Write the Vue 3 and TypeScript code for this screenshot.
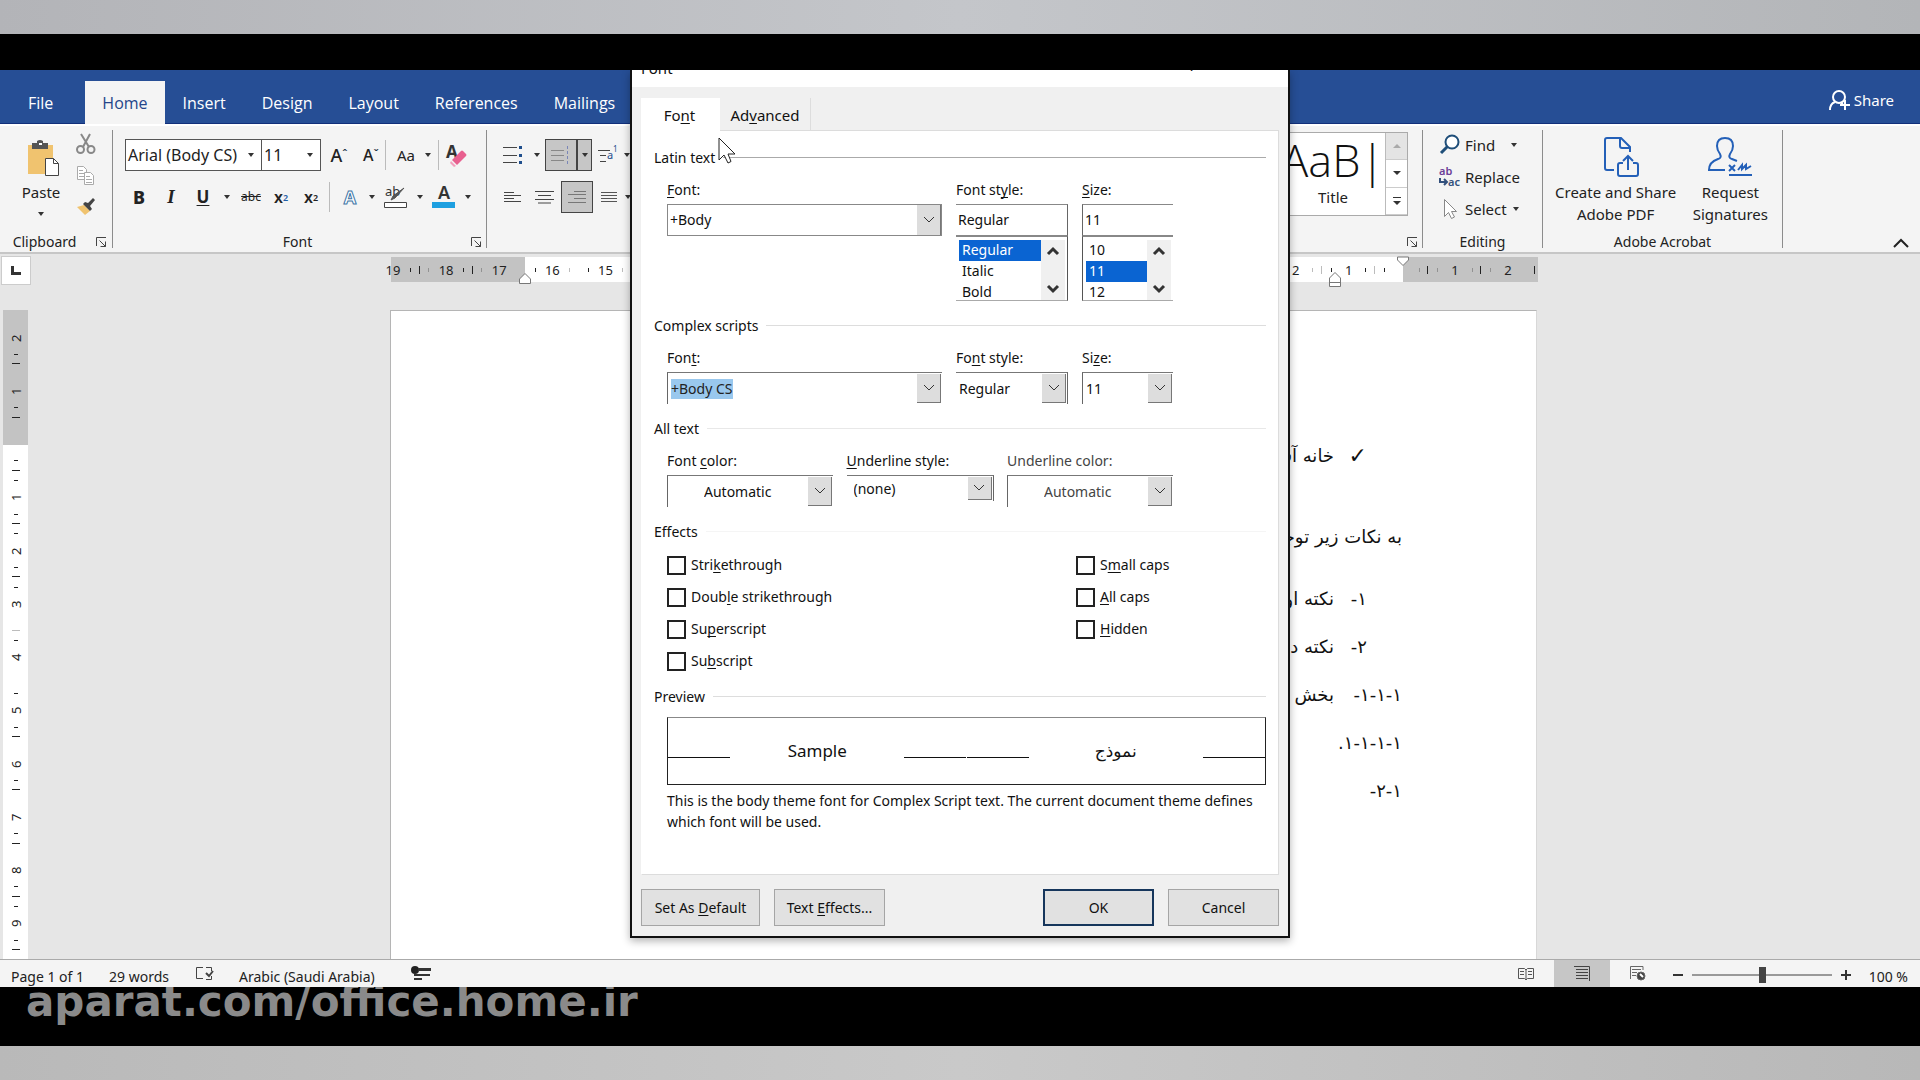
<script setup lang="ts">
import { h, onMounted, ref } from 'vue'

// Shared glyphs
const Caret = () =>
  h('svg', { class: 'caret', width: 6, height: 4, viewBox: '0 0 6 4' }, [h('path', { d: 'M0 0h6L3 4z', fill: '#333' })])
const Launcher = () =>
  h('svg', { width: 12, height: 12, viewBox: '0 0 12 12', fill: 'none', stroke: '#444' }, [
    h('path', { d: 'M1.5 10V1.5H11M4.5 4.5l6 6M10.5 5.5v5h-5' }),
  ])
const Chevron = () =>
  h('svg', { width: 12, height: 8, viewBox: '0 0 12 8', fill: 'none', stroke: '#333' }, [h('path', { d: 'M1 1l5 5 5-5' })])
const ScrollChevron = (props: { up?: boolean }) =>
  h('svg', { width: 12, height: 10, viewBox: '0 0 12 10', fill: 'none', stroke: '#333', 'stroke-width': 3 }, [
    h('path', { d: props.up ? 'M1 8l5-5 5 5' : 'M1 2l5 5 5-5' }),
  ])
ScrollChevron.props = { up: Boolean }

const tabs = ['File', 'Home', 'Insert', 'Design', 'Layout', 'References', 'Mailings']

// Ruler cell: label, tick before the label, tick after it, half-unit tick at the cell's end.
// Tones: 0 none, 1 faint, 2 dark
type Cell = [string, number, number, number]

const hCells: Cell[] = [
  ['19', 0, 2, 2], ['18', 1, 2, 2], ['17', 1, 0, 0], ['16', 2, 1, 0], ['15', 2, 1, 2],
  ...Array.from({ length: 12 }, (_, i): Cell => [String(14 - i), 1, 2, 2]),
  ['2', 1, 1, 1], ['1', 2, 2, 1], ['', 2, 1, 2], ['1', 1, 1, 2], ['2', 1, 0, 2],
]
const vCells: Cell[] = [
  ['2', 0, 2, 2], ['1', 0, 2, 2], ['', 0, 2, 2], ['1', 2, 2, 2], ['2', 2, 2, 2], ['3', 2, 0, 1],
  ['4', 2, 0, 0], ['5', 2, 2, 2], ['6', 0, 2, 2], ['7', 0, 2, 2], ['8', 0, 2, 2], ['9', 2, 2, 2],
]

interface DocLine { marker: string; text: string; kind: string }
const docLines: DocLine[] = [
  { marker: '✓', text: 'خانه آفیس', kind: 'bullet' },
  { marker: '', text: 'به نکات زیر توجه کنید', kind: 'plain' },
  { marker: '١-', text: 'نکته اول', kind: 'item' },
  { marker: '٢-', text: 'نکته دوم', kind: 'item' },
  { marker: '١-١-١-', text: 'بخش اول', kind: 'sub' },
  { marker: '١-١-١-١.', text: '', kind: 'sub' },
  { marker: '١-٢-', text: '', kind: 'sub' },
]

// [before, access key, after]
const effectsLeft = [
  ['Stri', 'k', 'ethrough'],
  ['Doub', 'l', 'e strikethrough'],
  ['Su', 'p', 'erscript'],
  ['Su', 'b', 'script'],
]
const effectsRight = [
  ['S', 'm', 'all caps'],
  ['', 'A', 'll caps'],
  ['', 'H', 'idden'],
]

const latinFont = ref('+Body')
const complexFont = ref('+Body CS')
const latinStyle = ref('Regular')
const latinSize = ref('11')
const zoomLevel = ref(50)
const complexInput = ref<HTMLInputElement | null>(null)

onMounted(() => {
  complexInput.value?.focus()
  complexInput.value?.select()
})
</script>

<template>
  <div class="screen">
    <div class="edge top"></div>
    <div class="band head"></div>

    <main class="word">
      <nav class="tabs">
        <a v-for="t in tabs" :key="t" href="#" class="tab" :class="{ active: t === 'Home' }">{{ t }}</a>
        <button class="share" type="button">
          <svg width="24" height="22" viewBox="0 0 24 22" fill="none" stroke="#fff" stroke-width="2">
            <circle cx="11" cy="8" r="6" /><path d="M2 21c0-4 2-7 5-8M13 14l2 1M17 11v10M12 16h10" />
          </svg>
          Share
        </button>
      </nav>

      <section class="ribbon">
        <div class="group clipboard">
          <div class="paste-row">
            <button class="paste" type="button">
              <svg width="34" height="38" viewBox="0 0 34 38">
                <path d="M1 5h25v29H1z" fill="#f0c36f" />
                <path d="M5 3h5V1q3-2 6 0v2h5v6H5z" fill="#555" /><path d="M12 3h3v2h-3z" fill="#fff" />
                <path d="M18.500 18.500h8l5 5v12h-13z" fill="#fff" stroke="#444" /><path d="M26.500 18.500v5h5" fill="none" stroke="#444" />
              </svg>
              <span>Paste</span>
              <Caret />
            </button>
            <div class="clip-tools">
              <button type="button" aria-label="Cut">
                <svg width="20" height="20" viewBox="0 0 20 20" fill="none" stroke="#888" stroke-width="2">
                  <path d="M5 0l8 13M14 0L7 13" /><circle cx="4.500" cy="15.500" r="3.500" /><circle cx="15" cy="15.500" r="3.500" />
                </svg>
              </button>
              <button type="button" aria-label="Copy">
                <svg width="20" height="20" viewBox="0 0 20 20" fill="#fff" stroke="#aaa">
                  <path d="M1.500.500h6l3 3v10h-9zM3 4.500h4M3 7.500h5M3 10.500h5" />
                  <path d="M8.500 6.500h6l3 3v9h-9zM10 10.500h4M10 13.500h6M10 16.500h6" />
                </svg>
              </button>
              <button type="button" aria-label="Format Painter">
                <svg width="20" height="18" viewBox="0 0 20 18">
                  <path d="M1 9l7-2 6 6-5 4z" fill="#f0c36f" /><path d="M7 6l7 7 2-2-2-3 5-6-2-2-5 5-3-1z" fill="#444" />
                </svg>
              </button>
            </div>
          </div>
          <div class="foot"><span>Clipboard</span><Launcher /></div>
        </div>

        <div class="group font">
          <div class="row">
            <button class="combo family" type="button">Arial (Body CS)<Caret /></button>
            <button class="combo size" type="button">11<Caret /></button>
            <button class="tool w32 grow-a" type="button">A<sup>ˆ</sup></button>
            <button class="tool w32 shrink-a" type="button">A<sup>ˇ</sup></button>
            <i class="rule"></i>
            <button class="tool w52 case" type="button">Aa<Caret /></button>
            <i class="rule"></i>
            <button class="tool w36" type="button" aria-label="Clear Formatting">
              <svg width="22" height="24" viewBox="0 0 22 24">
                <text x="0" y="15" font-size="17" font-weight="700" fill="#333">A</text>
                <path d="M6 17l9-9q1-1 2 0l3 3q1 1 0 2l-9 9z" fill="#e8608f" /><path d="M5 18l5 5-2 1-4-4z" fill="#f2a0bd" />
              </svg>
            </button>
          </div>
          <div class="row">
            <button class="tool w28 bold" type="button">B</button>
            <button class="tool w36 ital" type="button">I</button>
            <button class="tool w28 und" type="button"><u>U</u></button>
            <button class="tool w20" type="button" aria-label="Underline options"><Caret /></button>
            <button class="tool w28 strike" type="button"><s>abc</s></button>
            <button class="tool w32 script" type="button">x<sub>2</sub></button>
            <button class="tool w28 script" type="button">x<sup>2</sup></button>
            <i class="rule gap"></i>
            <button class="tool w32 outline-a" type="button">A</button>
            <button class="tool w12" type="button" aria-label="Effects options"><Caret /></button>
            <button class="tool w36" type="button" aria-label="Highlight">
              <svg width="24" height="24" viewBox="0 0 24 24">
                <text x="1" y="11" font-size="13" fill="#333">ab</text>
                <path d="M20 3l-9 10-4 2 2-4z" fill="#555" stroke="#555" /><path d="M.500 17.500h22v5H.500z" fill="#fff" stroke="#444" />
              </svg>
            </button>
            <button class="tool w12" type="button" aria-label="Highlight options"><Caret /></button>
            <button class="tool w36" type="button" aria-label="Font Color">
              <svg width="24" height="24" viewBox="0 0 24 24">
                <text x="6" y="14" font-size="18" font-weight="600" fill="#333">A</text>
                <path d="M0 17h23v6H0z" fill="#1d9fe0" />
              </svg>
            </button>
            <button class="tool w12" type="button" aria-label="Font color options"><Caret /></button>
          </div>
          <div class="foot"><span>Font</span><Launcher /></div>
        </div>

        <div class="group para">
          <div class="row">
            <button class="tool w32" type="button" aria-label="Bullets">
              <svg width="20" height="20" viewBox="0 0 20 20" stroke="#444">
                <path d="M0 2.500h14M0 10.500h14M0 17.500h14" /><path d="M16 2.500h3M16 10.500h3M16 17.500h3" stroke="#1f4e8c" stroke-width="3" />
              </svg>
            </button>
            <button class="tool w16" type="button" aria-label="Bullet options"><Caret /></button>
            <button class="tool toggled w32" type="button" aria-label="Numbering">
              <svg width="20" height="20" viewBox="0 0 20 20" stroke="#888">
                <path d="M0 5.500h13M0 10.500h13M0 15.500h13" /><path d="M16.500 1v18" stroke="#7a86b8" stroke-dasharray="3 2" />
              </svg>
            </button>
            <button class="tool toggled split w16" type="button" aria-label="Numbering options"><Caret /></button>
            <button class="tool w32" type="button" aria-label="Multilevel List">
              <svg width="20" height="20" viewBox="0 0 20 20" stroke="#444">
                <path d="M0 5.500h12M2 10.500h6M2 16.500h6" />
                <text x="9" y="14" font-size="11" fill="#1f4e8c" stroke="none">a</text>
                <text x="15" y="7" font-size="8" fill="#1f4e8c" stroke="none">1</text>
              </svg>
            </button>
            <Caret />
          </div>
          <div class="row">
            <button class="tool w32" type="button" aria-label="Align Left">
              <svg width="18" height="12" viewBox="0 0 18 12" stroke="#444"><path d="M0 1.500h10M0 4.500h17M0 7.500h10M0 10.500h17" /></svg>
            </button>
            <button class="tool w32" type="button" aria-label="Center">
              <svg width="20" height="14" viewBox="0 0 20 14" stroke="#444"><path d="M0 1.500h19M3 5.500h13M0 9.500h19M3 13h13" /></svg>
            </button>
            <button class="tool toggled w32" type="button" aria-label="Align Right">
              <svg width="18" height="14" viewBox="0 0 18 14" stroke="#777"><path d="M6 1.500h12M0 4.500h18M6 8.500h12M0 12.500h18" /></svg>
            </button>
            <button class="tool w32" type="button" aria-label="Justify">
              <svg width="16" height="12" viewBox="0 0 16 12" stroke="#555"><path d="M0 1.500h16M0 4.500h16M0 7.500h16M0 10.500h16" /></svg>
            </button>
            <Caret />
          </div>
        </div>

        <div class="group styles">
          <div class="gallery">
            <button class="style-card" type="button"><b>AaB|</b><span>Title</span></button>
            <div class="spin">
              <button type="button" class="off" aria-label="Previous styles"><svg width="8" height="4" viewBox="0 0 8 4"><path d="M0 4h8L4 0z" fill="#aaa" /></svg></button>
              <button type="button" aria-label="Next styles"><svg width="8" height="4" viewBox="0 0 8 4"><path d="M0 0h8L4 4z" fill="#333" /></svg></button>
              <button type="button" aria-label="More styles"><svg width="8" height="8" viewBox="0 0 8 8"><path d="M0 0h8v1H0zM0 4h8L4 8z" fill="#333" /></svg></button>
            </div>
          </div>
          <div class="foot end"><Launcher /></div>
        </div>

        <div class="group editing">
          <div class="edits">
            <button type="button">
              <svg width="22" height="22" viewBox="0 0 22 22" fill="none" stroke="#1f4e79" stroke-width="2"><circle cx="13" cy="8" r="6.500" fill="#fff" /><path d="M8.500 12.500L2 19" stroke-width="3" /></svg>
              <span>Find</span><Caret />
            </button>
            <button type="button">
              <svg width="22" height="22" viewBox="0 0 22 22">
                <text x="0" y="9" font-size="11" font-weight="600" fill="#6b3f98">ab</text><text x="9" y="20" font-size="11" font-weight="600" fill="#33507c">ac</text>
                <path d="M1 12v4h6M5 13l3 3-3 3" fill="none" stroke="#33507c" stroke-width="2" />
              </svg>
              <span>Replace</span>
            </button>
            <button type="button">
              <svg width="22" height="22" viewBox="0 0 22 22" fill="#fff" stroke="#888"><path d="M5.500 1.500v17l4-4 3 6 3-1.500-3-5.500h5z" /></svg>
              <span>Select</span><Caret />
            </button>
          </div>
          <div class="foot"><span>Editing</span></div>
        </div>

        <div class="group adobe">
          <div class="adobe-row">
            <button type="button" class="create">
              <svg width="38" height="42" viewBox="0 0 38 42" fill="none" stroke="#2460b8" stroke-width="2">
                <path d="M11 34H4q-2 0-2-2V4q0-2 2-2h14l9 9v5M17 2v8q0 2 2 2h8" />
                <path d="M20 27h-3q-2 0-2 2v9q0 2 2 2h16q2 0 2-2v-9q0-2-2-2h-3M25 34V20M20 25l5-5 5 5" />
              </svg>
              <span>Create and Share<br />Adobe PDF</span>
            </button>
            <button type="button">
              <svg width="46" height="42" viewBox="0 0 46 42" fill="none" stroke="#2460b8" stroke-width="2">
                <path d="M18 34H2q0-8 9-11 4-1 2-5-3-4-3-8 0-8 8-8t8 8q0 4-3 8-2 4 2 5l5 2" />
                <path d="M22 29l6 6M28 29l-6 6M31 34l4-5v4l4-4v4l5-3M22 39h23" />
              </svg>
              <span>Request<br />Signatures</span>
            </button>
          </div>
          <div class="foot"><span>Adobe Acrobat</span></div>
        </div>

        <div class="tail">
          <button type="button" aria-label="Collapse the Ribbon">
            <svg width="16" height="9" viewBox="0 0 16 9" fill="none" stroke="#222" stroke-width="2"><path d="M1 8l7-7 7 7" /></svg>
          </button>
        </div>
      </section>

      <div class="ruler-row">
        <button class="corner" type="button" aria-label="Tab selector">
          <svg width="10" height="10" viewBox="0 0 10 10"><path d="M0 0h3v6h7v3H0z" fill="#333" /></svg>
        </button>
        <div class="lane">
          <div class="hruler">
            <div class="cells">
              <span v-for="(c, i) in hCells" :key="i" class="cell">
                <i class="dot" :class="'t' + c[1]"></i><b>{{ c[0] }}</b><i class="dot" :class="'t' + c[2]"></i>
                <i class="half" :class="'t' + c[3]"></i>
              </span>
            </div>
            <svg class="mark left" width="12" height="11" viewBox="0 0 12 11"><path d="M.500 10.500V6L6 .500 11.500 6v4.500z" fill="#fff" stroke="#777" /></svg>
            <svg class="mark hang" width="12" height="15" viewBox="0 0 12 15"><path d="M.500 14.500V6L6 .500 11.500 6v8.500zM.500 10.500h11" fill="#fff" stroke="#777" /></svg>
            <svg class="mark first" width="12" height="9" viewBox="0 0 12 9"><path d="M.500 0v3L6 8.500 11.500 3V0z" fill="#fff" stroke="#777" /></svg>
          </div>
        </div>
      </div>

      <section class="work">
        <div class="vruler">
          <span v-for="(c, i) in vCells" :key="i" class="cell">
            <i class="dot" :class="'t' + c[1]"></i><b>{{ c[0] }}</b><i class="dot" :class="'t' + c[2]"></i>
            <i class="half" :class="'t' + c[3]"></i>
          </span>
        </div>
        <div class="lane">
          <article class="page" dir="rtl" lang="fa">
            <p v-for="(l, i) in docLines" :key="i" :class="l.kind"><span v-if="l.marker" class="marker">{{ l.marker }}</span><span>{{ l.text }}</span></p>
          </article>
        </div>
      </section>

      <footer class="status">
        <span class="pages">Page 1 of 1</span>
        <span class="words">29 words</span>
        <svg class="proof" width="18" height="16" viewBox="0 0 18 16" fill="none" stroke="#444"><path d="M7 1.500H.500v11H7M10 1.500h5.500V5M15.500 10v3.500H10" /><path d="M10 7l3 3 4-5" stroke-width="2" /></svg>
        <span class="lang">Arabic (Saudi Arabia)</span>
        <svg class="macro" width="22" height="18" viewBox="0 0 22 18"><circle cx="5" cy="5" r="4" fill="#222" /><path d="M8 3h13v3H8zM4 9h16v2H4zM4 13h8v2H4z" fill="#333" /></svg>
        <div class="views">
          <button type="button" aria-label="Read Mode"><svg width="16" height="14" viewBox="0 0 16 14" fill="none" stroke="#555"><path d="M.500 1.500h6L8 3l1.500-1.500h6v10h-6L8 13l-1.500-1.500h-6zM8 3v10M2 4.500h4M2 7.500h4M10 4.500h4M10 7.500h4" /></svg></button>
          <button type="button" class="on" aria-label="Print Layout"><svg width="16" height="16" viewBox="0 0 16 16" fill="none" stroke="#444"><path d="M0 .500h15.500V15M2 3.500h12M2 6.500h12M2 9.500h12M2 12.500h12" /></svg></button>
          <button type="button" aria-label="Web Layout"><svg width="16" height="15" viewBox="0 0 16 15" fill="none" stroke="#666"><path d="M.500 13V.500H13V4M2 3.500h9M2 6.500h5M2 9.500h4" /><circle cx="11" cy="10" r="4" fill="#444" /><path d="M10 8l3 3" stroke="#fff" stroke-width="2" /></svg></button>
        </div>
        <button class="step" type="button" aria-label="Zoom out"><svg width="12" height="12" viewBox="0 0 12 12"><path d="M1 5h10v2H1z" fill="#333" /></svg></button>
        <input v-model="zoomLevel" class="zoom" type="range" min="0" max="100" aria-label="Zoom" />
        <button class="step" type="button" aria-label="Zoom in"><svg width="12" height="12" viewBox="0 0 12 12"><path d="M1 5h10v2H1zM5 1h2v10H5z" fill="#333" /></svg></button>
        <span class="percent">100 %</span>
      </footer>

      <form class="dialog" role="dialog" aria-label="Font" @submit.prevent>
        <header><span>Font</span><span class="win">?</span><span class="win">✕</span></header>
        <div class="dlg-tabs">
          <button type="button" class="on">Fo<u>n</u>t</button>
          <button type="button">Ad<u>v</u>anced</button>
        </div>
        <div class="panel">
          <h3 class="l1">Latin text</h3>
          <div class="fields latin">
            <div class="field wide">
              <label for="lf"><u>F</u>ont:</label>
              <div class="box full"><input id="lf" v-model="latinFont" type="text" /><button type="button" aria-label="Open fonts"><Chevron /></button></div>
            </div>
            <div class="field mid">
              <label for="ls">Font st<u>y</u>le:</label>
              <div class="box right full"><input id="ls" v-model="latinStyle" type="text" /></div>
              <div class="list right">
                <select v-model="latinStyle" size="3" aria-label="Font styles"><option>Regular</option><option>Italic</option><option>Bold</option></select>
                <div class="scroll"><ScrollChevron up /><ScrollChevron /></div>
              </div>
            </div>
            <div class="field small">
              <label for="lz"><u>S</u>ize:</label>
              <div class="box left full"><input id="lz" v-model="latinSize" type="text" /></div>
              <div class="list left">
                <select v-model="latinSize" size="3" aria-label="Sizes"><option>10</option><option>11</option><option>12</option></select>
                <div class="scroll"><ScrollChevron up /><ScrollChevron /></div>
              </div>
            </div>
          </div>

          <h3 class="l2">Complex scripts</h3>
          <div class="fields">
            <div class="field wide">
              <label for="cf">Fon<u>t</u>:</label>
              <div class="box left"><input id="cf" ref="complexInput" v-model="complexFont" type="text" /><button type="button" aria-label="Open complex fonts"><Chevron /></button></div>
            </div>
            <div class="field mid">
              <label for="cs">Fo<u>n</u>t style:</label>
              <div class="box right"><select id="cs"><option>Regular</option></select><span class="drop"><Chevron /></span></div>
            </div>
            <div class="field small">
              <label for="cz">Si<u>z</u>e:</label>
              <div class="box left"><select id="cz"><option>11</option></select><span class="drop"><Chevron /></span></div>
            </div>
          </div>

          <h3 class="l3">All text</h3>
          <div class="fields">
            <div class="field color">
              <label for="fc">Font <u>c</u>olor:</label>
              <div class="box left auto"><select id="fc"><option>Automatic</option></select><span class="drop"><Chevron /></span></div>
            </div>
            <div class="field under">
              <label for="us"><u>U</u>nderline style:</label>
              <div class="box right short"><select id="us"><option>(none)</option></select><span class="drop"><Chevron /></span></div>
            </div>
            <div class="field color dim">
              <label for="uc">Underline color:</label>
              <div class="box left auto"><select id="uc"><option>Automatic</option></select><span class="drop"><Chevron /></span></div>
            </div>
          </div>

          <h3 class="l4">Effects</h3>
          <div class="effects">
            <div>
              <label v-for="e in effectsLeft" :key="e.join('')"><input type="checkbox" /><span>{{ e[0] }}<u>{{ e[1] }}</u>{{ e[2] }}</span></label>
            </div>
            <div>
              <label v-for="e in effectsRight" :key="e.join('')"><input type="checkbox" /><span>{{ e[0] }}<u>{{ e[1] }}</u>{{ e[2] }}</span></label>
            </div>
          </div>

          <h3 class="l2">Preview</h3>
          <div class="preview">
            <div><i></i><span>Sample</span><i></i></div>
            <div><i></i><span lang="ar" class="ar">نموذج</span><i></i></div>
          </div>
          <p class="note">This is the body theme font for Complex Script text. The current document theme defines which font will be used.</p>
        </div>
        <div class="actions">
          <button type="button" class="b1">Set As <u>D</u>efault</button>
          <button type="button">Text <u>E</u>ffects...</button>
          <button type="submit" class="ok">OK</button>
          <button type="button">Cancel</button>
        </div>
        <svg class="pointer" width="18" height="28" viewBox="0 0 18 28"><path d="M1 1v22l5-5 4 8 3-1.500-3-7.500h7z" fill="#fff" stroke="#222" /></svg>
      </form>
    </main>

    <div class="band base"><span class="watermark">aparat.com/office.home.ir</span></div>
    <div class="edge bottom"></div>
  </div>
</template>

<style>
body { margin: 0; }
</style>

<style scoped>
* { box-sizing: border-box; }
.screen {
  min-height: 100vh;
  display: flex;
  flex-direction: column;
  overflow: hidden;
  font-family: "Noto Sans", "Open Sans", sans-serif;
  font-size: 15px;
  line-height: 20px;
  color: #222;
}
button, input, select { font: inherit; color: inherit; margin: 0; padding: 0; border: 0; background: none; outline: 0; border-radius: 0; }
u { text-decoration-skip-ink: none; text-underline-offset: 2px; }
i, b { font-style: normal; }
svg { display: block; flex: none; overflow: visible; }

.edge.top { height: 34px; background: linear-gradient(90deg, #b3b4b8, #c4c6ca 50%, #b3b5b8); }
.edge.bottom { flex: 1; min-height: 34px; background: linear-gradient(90deg, #b9b9b9, #c9c9c9 50%, #b8b8b8); }
.band { background: #000; }
.band.head { height: 36px; }
.band.base { height: 59px; padding-left: 26px; overflow: hidden; }
.watermark { font: 700 42px/30px "DejaVu Sans", sans-serif; color: #8a8a8a; }

.word { position: relative; background: #e6e6e6; overflow: hidden; }

/* Tab strip */
.tabs { height: 54px; display: flex; align-items: flex-end; background: #264e95; border-bottom: 1px solid #12307a; }
.tab { color: #fff; text-decoration: none; font-family: "Open Sans", sans-serif; font-size: 16px; line-height: 40px; padding: 0 18px; }
.tab:first-child { padding: 0 32px 0 28px; }
.tab.active { background: #f4f4f4; color: #24458a; line-height: 41px; margin-bottom: -1px; padding: 2px 17px 0; }
.share { margin-left: auto; margin-right: 26px; height: 46px; display: flex; align-items: center; gap: 2px; color: #fff; }

/* Ribbon */
.ribbon { height: 130px; display: flex; background: #f4f4f4; border-top: 2px solid #fff; border-bottom: 2px solid #c6c6c6; }
.group { position: relative; display: flex; flex-direction: column; margin: 4px 0; border-right: 1px solid #8c8c8c; flex: none; }
.foot { margin-top: auto; height: 12px; display: flex; align-items: center; font-size: 14px; }
.foot span { flex: 1; text-align: center; }
.foot svg { margin-right: 4px; }
.foot.end { justify-content: flex-end; }
.clipboard { width: 113px; }
.clipboard .foot { padding-right: 1px; }
.clipboard .foot span { padding-right: 6px; }
.paste-row { display: flex; padding: 4px 0 0 20px; }
.paste { width: 42px; display: flex; flex-direction: column; align-items: center; gap: 4px; padding-top: 6px; }
.paste svg:first-child { margin-left: 6px; }
.paste .caret { margin-top: 6px; }
.clip-tools { display: flex; flex-direction: column; gap: 12px; padding-left: 14px; }
.row { display: flex; align-items: center; height: 32px; margin-bottom: 10px; }
.font { width: 374px; padding: 9px 0 0 12px; }
.combo { height: 32px; display: flex; align-items: center; justify-content: space-between; background: #fff; border: 1px solid #555; padding: 0 7px 0 2px; font-size: 16px; }
.combo.family { width: 137px; }
.combo.size { width: 60px; margin-left: -1px; }
.tool { height: 32px; display: flex; align-items: center; justify-content: center; flex: none; }
.w12 { width: 12px; } .w16 { width: 16px; } .w20 { width: 20px; } .w28 { width: 28px; }
.w32 { width: 32px; } .w36 { width: 36px; } .w52 { width: 52px; }
.rule { width: 1px; height: 30px; background: #bbb; }
.rule.gap { margin: 0 4px; }
.grow-a, .shrink-a { padding-left: 4px; font-weight: 500; }
.grow-a { font-size: 18px; } .shrink-a { font-size: 16px; }
.grow-a sup, .shrink-a sup { font-size: 12px; line-height: 12px; color: #234; }
.case { gap: 10px; padding-left: 4px; }
.bold { font-size: 18px; font-weight: 800; }
.ital { font: italic 700 19px "Liberation Serif", serif; }
.und { font-size: 17px; font-weight: 700; }
.strike { font-size: 12px; }
.script { font-size: 16px; font-weight: 600; }
.script sub, .script sup { font-size: 9px; line-height: 9px; }
.script sub { color: #1f5ea8; }
.outline-a { font-size: 18px; font-weight: 700; color: #fff; -webkit-text-stroke: 1px #3f77a8; }
.para { width: 144px; padding: 9px 0 0 10px; border: 0; }
.toggled { background: #c6c6c6; border: 1px solid #444; }
.toggled.split { border-left-width: 2px; margin-left: -1px; }

.styles { flex: 1; min-width: 0; padding-top: 2px; }
.gallery { display: flex; justify-content: flex-end; margin-right: 14px; height: 84px; border: 1px solid #aaa; border-left: 0; background: #fff; }
.style-card { width: 104px; display: flex; flex-direction: column; align-items: center; }
.style-card b { font: 300 45px/54px "Open Sans", sans-serif; color: #111; white-space: nowrap; }
.style-card span { font-size: 15px; }
.spin { width: 22px; display: flex; flex-direction: column; border-left: 1px solid #bbb; }
.spin button { flex: 1; display: flex; align-items: center; justify-content: center; border-bottom: 1px solid #ccc; }
.spin .off { background: #e4e4e4; }
.editing { width: 120px; }
.edits { display: flex; flex-direction: column; gap: 12px; padding: 5px 0 0 16px; }
.edits button { display: flex; align-items: center; gap: 4px; height: 20px; }
.edits button span { margin-right: 2px; }
.edits button:first-child span { margin-right: 12px; }
.adobe { width: 240px; }
.adobe-row { display: flex; justify-content: space-between; padding: 6px 14px 0 12px; }
.adobe-row button { display: flex; flex-direction: column; align-items: center; gap: 3px; line-height: 22px; }
.create svg { margin-left: 12px; }
.tail { width: 137px; display: flex; align-items: flex-end; justify-content: flex-end; padding: 0 11px 4px 0; }

/* Rulers */
.ruler-row { display: flex; height: 56px; }
.corner { width: 30px; height: 29px; margin: 2px 4px 0 1px; display: flex; align-items: center; justify-content: center; background: #fff; border: 1px solid #ccc; }
.lane { flex: 1; display: flex; justify-content: center; padding-right: 27px; }
.hruler { position: relative; width: 1147px; height: 25px; margin-top: 3px; background: linear-gradient(90deg, #c3c3c3 134px, #fff 134px, #fff 1012px, #c3c3c3 1012px); }
.cells { display: flex; width: 1168px; margin-left: -24px; height: 25px; }
.cell { position: relative; flex: 1; display: flex; align-items: center; justify-content: space-evenly; font-size: 13px; color: #222; }
.cell b { font-weight: 400; min-width: 16px; text-align: center; }
.dot { width: 1px; height: 4px; background: #222; }
.half { position: absolute; right: 0; width: 1px; height: 8px; background: #222; }
.t0 { opacity: 0; } .t1 { opacity: 0.3; }
.mark { position: absolute; }
.mark.left { left: 128px; top: 16px; }
.mark.hang { left: 938px; top: 15px; }
.mark.first { left: 1006px; top: 0; }
.work { display: flex; height: 649px; }
.vruler { width: 25px; margin: 0 6px 0 3px; padding: 1px 0 9px; display: flex; flex-direction: column; background: linear-gradient(#c3c3c3 135px, #fff 135px); }
.vruler .cell { flex-direction: column; }
.vruler .cell b { writing-mode: vertical-rl; transform: rotate(180deg); min-width: 0; min-height: 14px; line-height: 16px; }
.vruler .dot { width: 4px; height: 1px; }
.vruler .half { right: auto; bottom: 0; width: 8px; height: 1px; }

.page { width: 1147px; background: #fff; border: 1px solid #b5b5b5; border-bottom: 0; border-right-color: #d8d8d8; padding: 133px 134px 0; font: 18px/24px "DejaVu Sans", sans-serif; color: #111; }
.page p { display: flex; margin: 0 0 24px; }
.page .marker { width: 68px; flex: none; white-space: nowrap; }
.page .bullet, .page .item { padding-right: 35px; }
.page .bullet .marker, .page .item .marker { width: 33px; }
.page .bullet { margin-bottom: 57px; }
.page .bullet .marker { font-size: 22px; }
.page .plain { margin-bottom: 38px; }

/* Status bar */
.status { height: 28px; display: flex; align-items: center; background: #f4f4f4; border-top: 1px solid #aaa; padding: 6px 12px 0 11px; font-size: 14px; }
.words { margin-left: 25px; }
.proof { margin-left: 27px; margin-bottom: 6px; }
.lang { margin-left: 25px; }
.macro { margin-left: 35px; margin-bottom: 6px; }
.views { margin-left: auto; display: flex; align-self: stretch; margin-top: -6px; }
.views button { width: 56px; display: flex; align-items: center; justify-content: center; }
.views .on { background: #c6c6c6; }
.step { width: 14px; display: flex; justify-content: center; margin: 0 5px 4px; }
.zoom { appearance: none; width: 140px; height: 16px; margin: 0 2px 4px; background: linear-gradient(transparent 7px, #999 7px, #999 9px, transparent 9px); }
.zoom::-webkit-slider-thumb { appearance: none; width: 7px; height: 16px; background: #444; }
.percent { width: 50px; text-align: right; white-space: nowrap; }

/* Font dialog */
.dialog { position: absolute; top: 0; left: 0; right: 0; margin: 0 auto; width: 660px; height: 868px; background: #f0f0f0; border: 2px solid #111; border-top: 0; padding: 0 9px; display: flex; flex-direction: column; box-shadow: 0 3px 8px rgba(0, 0, 0, 0.3); color: #111; }
.dialog header { height: 17px; margin: 0 -9px; padding: 0 26px 9px 9px; display: flex; align-items: flex-end; background: #fff; overflow: hidden; }
.dialog header span { line-height: 20px; }
.dialog header .win { margin-left: 56px; font-size: 13px; line-height: 24px; }
.dialog header .win:nth-child(2) { margin-left: auto; }
.dlg-tabs { display: flex; padding-top: 11px; }
.dlg-tabs button { height: 32px; width: 91px; padding-top: 2px; border-right: 1px solid #ddd; }
.dlg-tabs .on { width: 79px; background: #fff; position: relative; padding: 0 2px 0 0; border-right: 0; height: 33px; margin-bottom: -1px; }
.panel { height: 745px; background: #fff; border: 1px solid #dcdcdc; border-left-color: #fff; padding: 17px 12px 0 12px; }
h3 { margin: 0; font-size: 14px; font-weight: 400; line-height: 20px; display: flex; align-items: center; gap: 8px; }
h3::after { content: ""; flex: 1; height: 1px; background: #ddd; margin-bottom: 2px; }
h3.l1::after { background: #aaa; } h3.l3::after { background: #e8e8e8; } h3.l4::after { background: #f5f5f5; }
.fields { display: flex; padding: 12px 93px 0 13px; font-size: 14px; justify-content: space-between; height: 83px; }
.fields.latin { height: 148px; }
.field label { display: block; line-height: 20px; margin-bottom: 4px; }
.wide { width: 275px; } .mid { width: 112px; } .small { width: 91px; } .color { width: 166px; } .under { width: 147px; }
.box { height: 32px; display: flex; align-items: stretch; border-top: 1px solid #777; padding: 1px; background: #fff; }
.box.full { border: 1px solid #888; padding: 0; }
.box.left { border-left: 1px solid #666; }
.box.right { border-right: 1px solid #666; }
.box.full.left { border-right: 0; }
.box.full.right { border-left: 0; }
.box.short { height: 26px; }
.box input, .box select { flex: 1; min-width: 0; width: 100%; padding-left: 2px; appearance: none; }
.box.auto select { padding-left: 35px; }
.box.short select { padding-left: 6px; }
.dim { color: #444; }
.box button, .drop { width: 24px; flex: none; display: flex; align-items: center; justify-content: center; background: #ddd; border: solid #777; border-width: 0 1px 1px 0; pointer-events: none; }
.box.full button { border-bottom: 0; }
.box input::selection { background: #99c8ee; color: #222; }
.list { height: 65px; border-top: 1px solid #888; border-bottom: 1px solid #aaa; padding: 3px 2px 0 3px; display: flex; }
.list.left { border-left: 1px solid #555; }
.list.right { border-right: 1px solid #555; }
.list select { flex: 1; min-width: 0; height: 60px; overflow: hidden; appearance: none; }
.list option { height: 21px; min-height: 21px; line-height: 21px; padding: 0 0 0 3px; }
.list option:checked { background: #0a64d2 linear-gradient(#0a64d2, #0a64d2); color: #fff; }
.scroll { width: 24px; background: #f0f0f0; display: flex; flex-direction: column; align-items: center; justify-content: space-between; padding: 6px 0; }
.effects { display: flex; height: 145px; padding: 13px 13px 0 13px; font-size: 14px; }
.effects > div { flex: 1; }
.effects > div:first-child { flex: none; width: 409px; }
.effects label { display: flex; align-items: center; gap: 5px; height: 20px; margin-bottom: 12px; }
.effects input { appearance: none; width: 19px; height: 19px; border: 2px solid #222; background: #fff; }
.preview { height: 68px; margin: 10px 0 0 13px; border: 1px solid #222; border-top-color: #888; display: flex; font-size: 17px; }
.preview div { flex: 1; display: flex; align-items: center; justify-content: space-between; }
.preview i { width: 62px; height: 1px; background: #111; margin-top: 13px; }
.ar { font-family: "DejaVu Sans", sans-serif; }
.note { margin: 5px -6px 0 13px; font-size: 14px; line-height: 21px; }
.actions { display: flex; gap: 14px; padding-top: 14px; }
.actions button { height: 37px; background: #e1e1e1; border: 1px solid #a5a5a5; font-size: 14px; width: 111px; }
.actions .b1 { width: 119px; }
.actions .ok { margin-left: auto; border: 2px solid #16365c; }
.pointer { position: absolute; left: 86px; top: 67px; }
</style>
